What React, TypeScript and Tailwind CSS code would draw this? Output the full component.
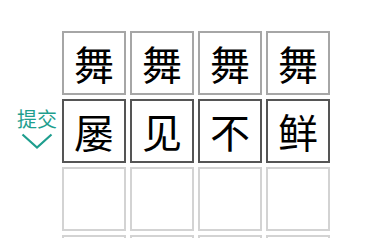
const rows: { chars: string[]; border: string; label?: boolean }[] = [
  { chars: ["舞", "舞", "舞", "舞"], border: "border-[#a6a6a6]" },
  { chars: ["屡", "见", "不", "鲜"], border: "border-[#555555]", label: true },
  { chars: ["", "", "", ""], border: "border-[#d3d3d3]" },
  { chars: ["", "", "", ""], border: "border-[#d3d3d3]" },
];

export default function App() {
  return (
    <div
      className="h-[238px] w-[389px] overflow-hidden bg-white pt-[31px]"
      style={{ fontFamily: '"Noto Sans CJK SC", "Noto Sans", sans-serif' }}
    >
      <div className="flex flex-col gap-[4px]">
        {rows.map((row, i) => (
          <div key={i} className="flex">
            <div className="flex w-[62px] shrink-0 items-center justify-end pr-[5px] pb-[6px]">
              {row.label && (
                <button className="flex flex-col items-center text-[#1e9e8e]">
                  <span className="text-[20px] leading-[22px]">提交</span>
                  <svg width="32" height="16" viewBox="0 0 32 16" className="mt-[3px]">
                    <path d="M1.5 1.5 L16 14.5 L30.5 1.5" fill="none" stroke="currentColor" strokeWidth="2.2" />
                  </svg>
                </button>
              )}
            </div>
            <div className="flex gap-[4px]">
              {row.chars.map((c, j) => (
                <div
                  key={j}
                  className={`flex h-[64px] w-[64px] items-center justify-center border-2 ${row.border} text-[40px] leading-none text-black`}
                >
                  {c}
                </div>
              ))}
            </div>
          </div>
        ))}
      </div>
    </div>
  );
}
